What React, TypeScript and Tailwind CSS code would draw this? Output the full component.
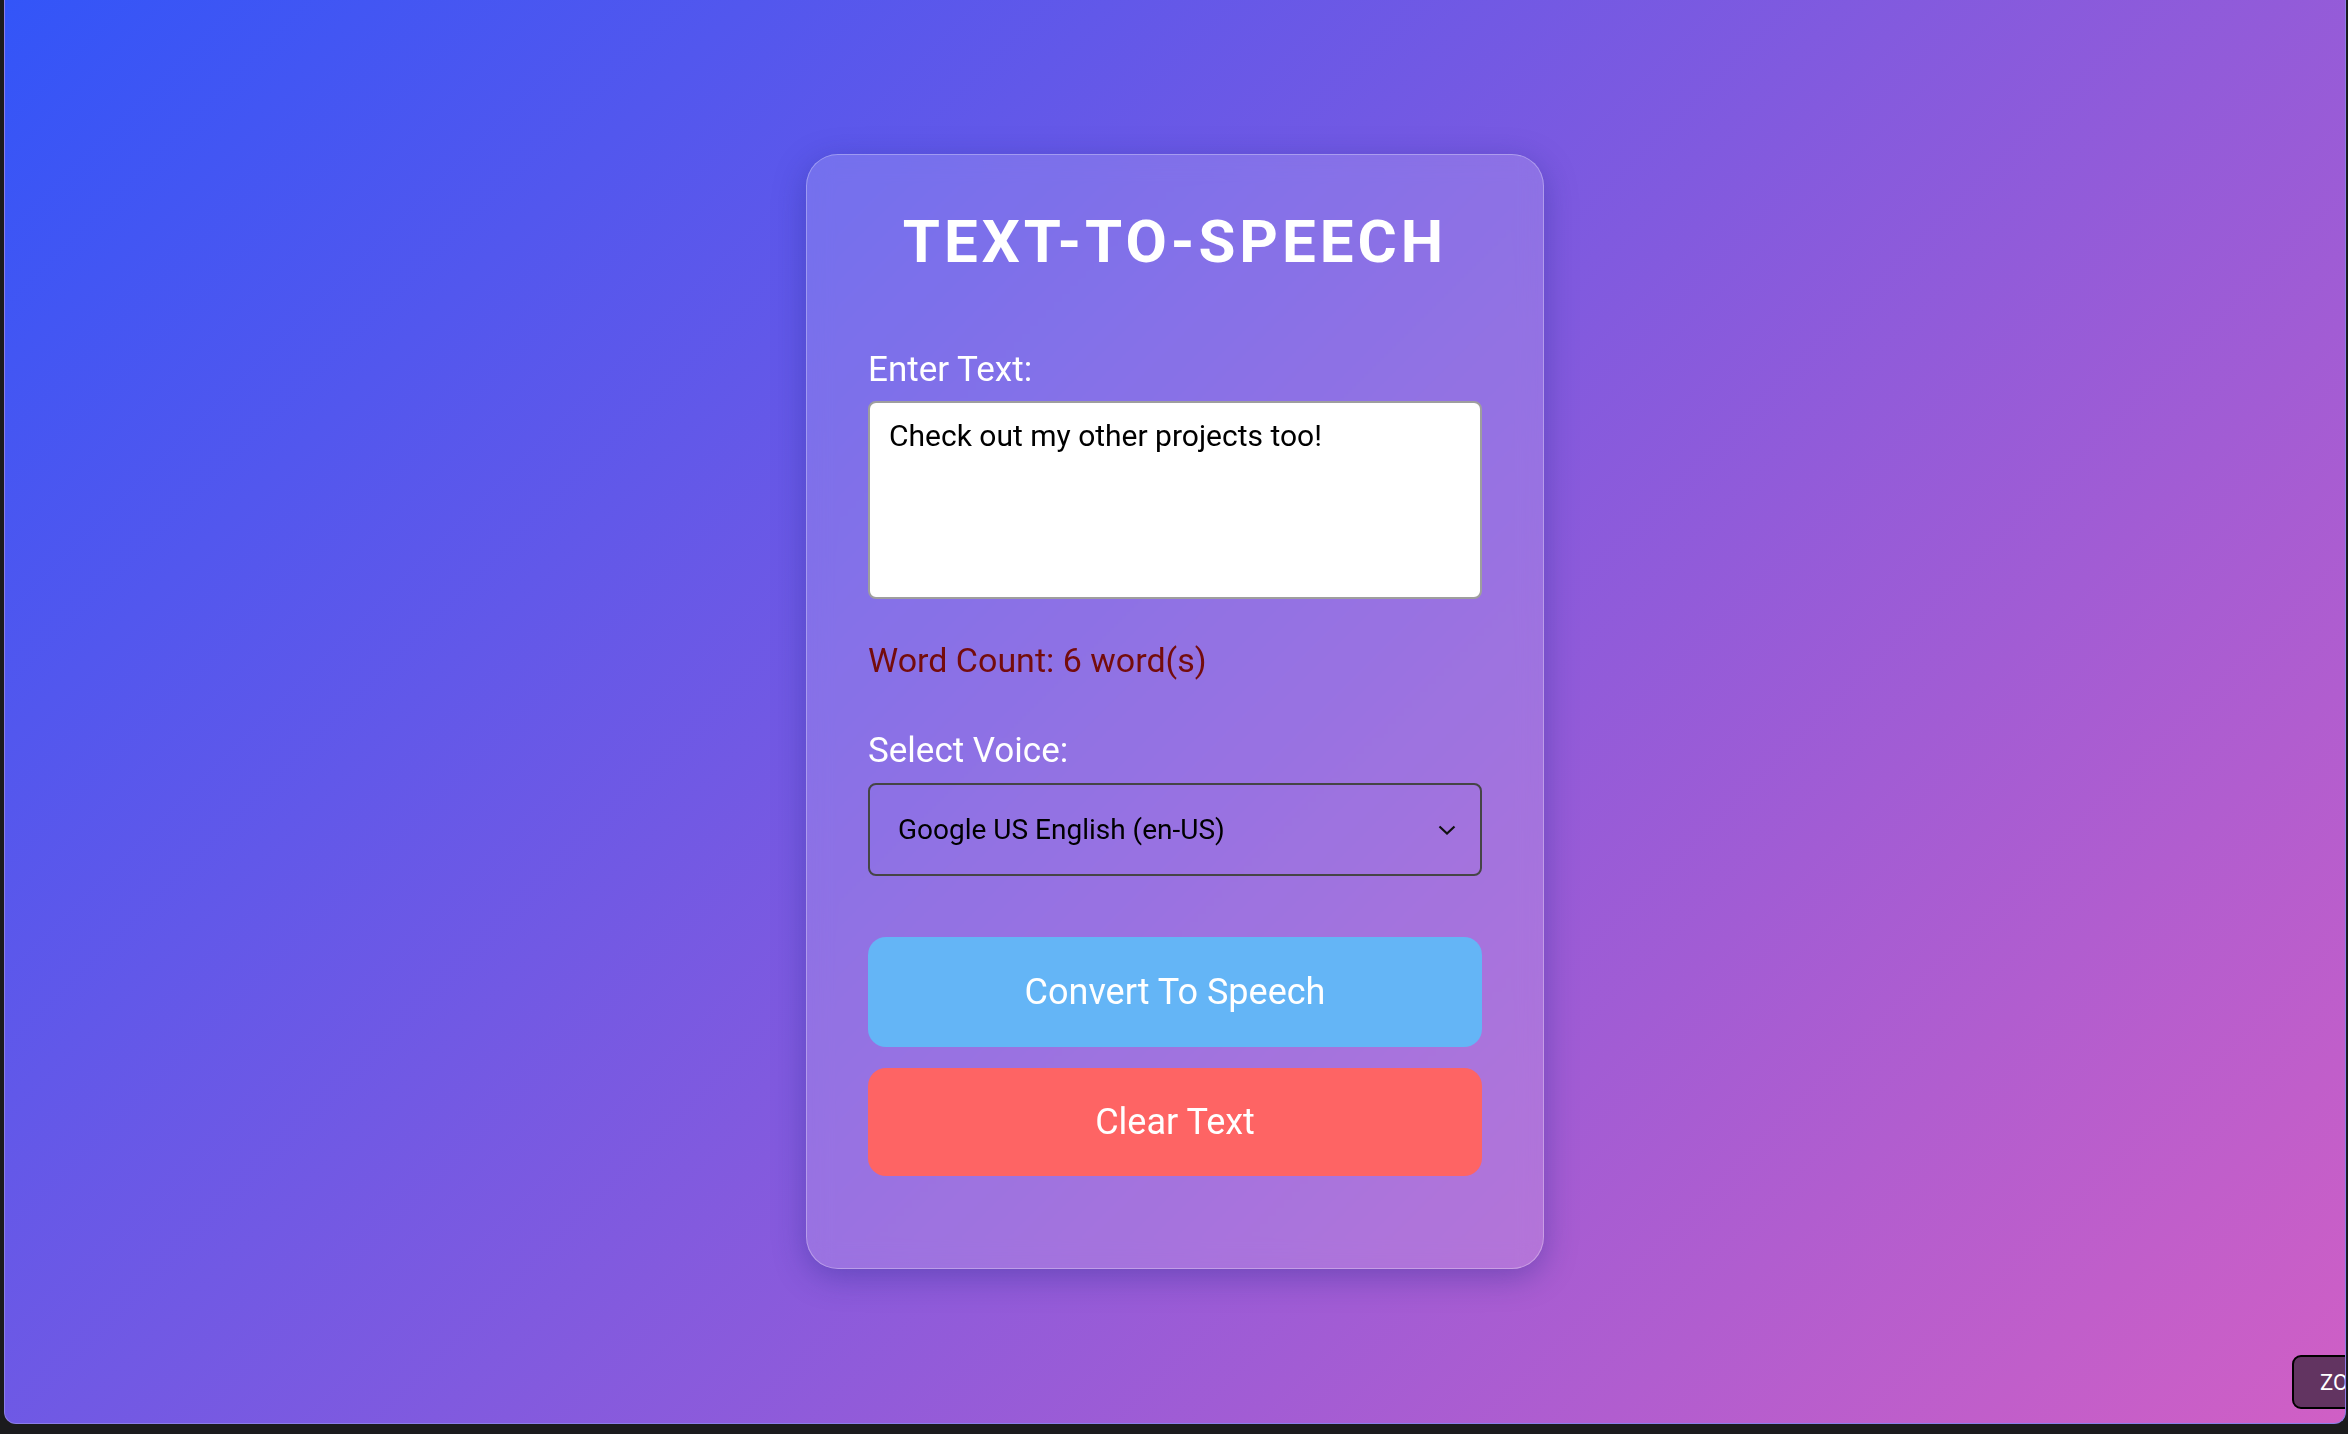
import { useEffect, useRef, useState } from "react";

export default function App() {
  const [text, setText] = useState("Check out my other projects too!");
  const [voice, setVoice] = useState("google-us");
  const areaRef = useRef<HTMLTextAreaElement>(null);

  // put the caret at the end of the text, like the user just typed it
  useEffect(() => {
    const el = areaRef.current;
    if (!el) return;
    el.focus();
    el.setSelectionRange(el.value.length, el.value.length);
  }, []);

  const wordCount = text.trim() === "" ? 0 : text.trim().split(/\s+/).length;

  return (
    <div className="h-[1434px] w-full overflow-hidden bg-[#1b1b1d]">
      {/* Browser window */}
      <div
        className="relative ml-[4px] mr-[2px] h-[1424px] overflow-hidden rounded-b-[12px] border border-t-0 border-[#8c7ee8] bg-[linear-gradient(135deg,#3355f8,#d05fc5)]"
        style={{ fontFamily: "Roboto, 'Noto Sans', Arial, sans-serif" }}
      >
        <div className="flex h-full items-center justify-center">
          {/* Card */}
          <div className="w-[738px] rounded-[32px] border border-white/30 bg-white/15 px-[61px] pb-[92px] pt-[52px] shadow-[0_8px_32px_rgba(31,38,135,0.37)] backdrop-blur-md">
            <h1 className="text-center text-[60px] font-bold leading-[70px] tracking-[4px] text-white">
              TEXT-TO-SPEECH
            </h1>

            <label className="mt-[72px] block text-[35px] leading-[41px] text-white">
              Enter Text:
            </label>
            <textarea
              ref={areaRef}
              value={text}
              onChange={(e) => setText(e.target.value)}
              className="mt-[11px] block h-[198px] w-full resize-none rounded-[8px] border-2 border-[#9e9e9e] bg-white px-[19px] py-[15px] text-[30px] leading-[35px] text-black caret-black outline-none"
            />

            <p className="mt-[41px] text-[34px] leading-[40px] text-[#740c0c]">
              Word Count: {wordCount} word(s)
            </p>

            <label className="mt-[50px] block text-[35px] leading-[41px] text-white">
              Select Voice:
            </label>
            <div className="relative mt-[12px]">
              <select
                value={voice}
                onChange={(e) => setVoice(e.target.value)}
                className="block h-[93px] w-full appearance-none rounded-[8px] border-2 border-[#454545] bg-transparent pl-[28px] pr-[60px] text-[28px] text-black outline-none"
              >
                <option value="google-us">Google US English (en-US)</option>
                <option value="google-uk">Google UK English Female (en-GB)</option>
              </select>
              <svg
                className="pointer-events-none absolute right-[26px] top-[42px] h-[10px] w-[18px]"
                viewBox="0 0 18 10"
                fill="none"
                stroke="#111"
                strokeWidth="2.2"
              >
                <path d="M1.5 1.5 L9 8.5 L16.5 1.5" />
              </svg>
            </div>

            <button className="mt-[61px] block h-[110px] w-full rounded-[18px] bg-[#64b5f6] text-[36px] text-white">
              Convert To Speech
            </button>
            <button
              onClick={() => setText("")}
              className="mt-[21px] block h-[108px] w-full rounded-[18px] bg-[#fe6464] text-[36px] text-white"
            >
              Clear Text
            </button>
          </div>
        </div>

        {/* zoom widget stuck to the corner */}
        <div className="absolute left-[2287px] top-[1355px] flex h-[54px] w-[100px] items-center rounded-[9px] border-2 border-black bg-[#623461] pl-[26px] text-[22px] text-white">
          ZO
        </div>
      </div>
    </div>
  );
}
